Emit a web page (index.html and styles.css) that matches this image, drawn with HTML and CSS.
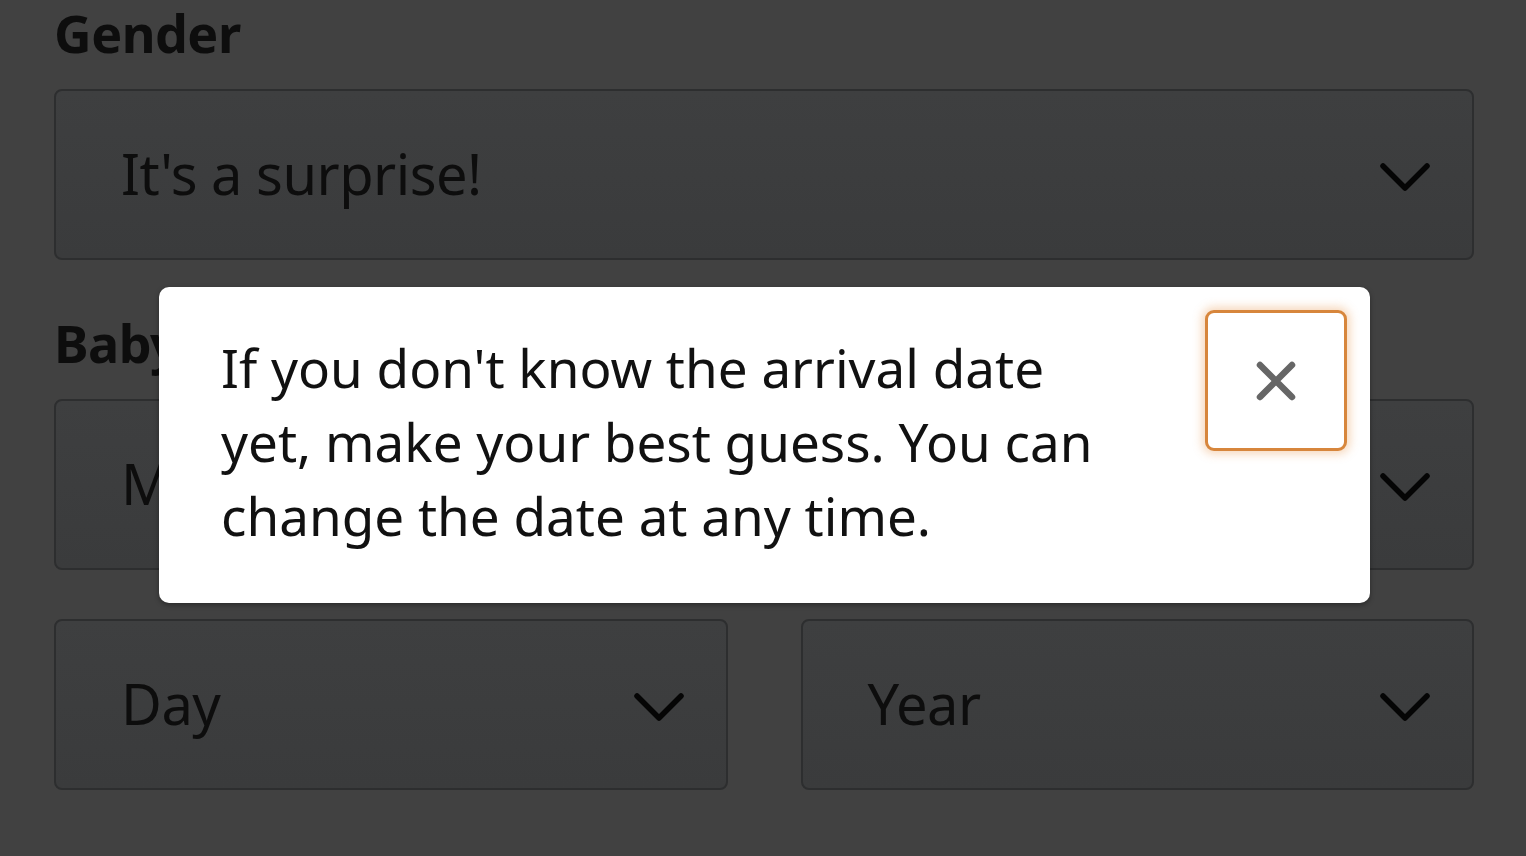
FILE: index.html
```html
<!DOCTYPE html>
<html>
<head>
<meta charset="utf-8">
<link rel="stylesheet" href="styles.css">
</head>
<body>
<div class="page">
  <div class="label">Gender</div>
  <div class="select">
    <span class="value">It's a surprise!</span>
    <svg class="chev" viewBox="0 0 50 30"><path d="M3 4 L25 26 L47 4" /></svg>
  </div>
  <div class="label label-gap">Baby's arrival date</div>
  <div class="select">
    <span class="value">Month</span>
    <svg class="chev" viewBox="0 0 50 30"><path d="M3 4 L25 26 L47 4" /></svg>
  </div>
  <div class="row">
    <div class="select">
      <span class="value">Day</span>
      <svg class="chev" viewBox="0 0 50 30"><path d="M3 4 L25 26 L47 4" /></svg>
    </div>
    <div class="select">
      <span class="value">Year</span>
      <svg class="chev" viewBox="0 0 50 30"><path d="M3 4 L25 26 L47 4" /></svg>
    </div>
  </div>
</div>
<div class="popover">
  <p class="pop-text">If you don't know the arrival date<br>yet, make your best guess. You can<br>change the date at any time.</p>
  <button class="close" aria-label="Close">
    <svg viewBox="0 0 40 40"><path d="M4 4 L36 36 M36 4 L4 36" /></svg>
  </button>
</div>
</body>
</html>
```
FILE: styles.css
```css
html, body {
  margin: 0;
  padding: 0;
}
body {
  background: #414141;
  width: 1526px;
  height: 856px;
  overflow: hidden;
  font-family: "Noto Sans", "Open Sans", sans-serif;
  color: #0d0d0d;
  position: relative;
}
.page {
  padding: 3px 52px 0 54px;
}
.label {
  font-size: 52px;
  font-weight: 700;
  line-height: 60px;
  height: 60px;
  letter-spacing: -0.5px;
  white-space: nowrap;
}
.label-gap {
  margin-top: 53px;
}
.select {
  margin-top: 26px;
  height: 171px;
  box-sizing: border-box;
  border: 2px solid #2d2e2f;
  border-radius: 8px;
  background: linear-gradient(180deg, #3e3f40 0%, #3a3b3c 100%);
  display: flex;
  align-items: center;
  justify-content: space-between;
  padding: 0 42px 0 65px;
}
.value {
  font-size: 56px;
  line-height: 60px;
  letter-spacing: -0.5px;
  color: #0d0d0d;
  margin-top: -3px;
}
.chev {
  width: 50px;
  height: 30px;
  margin-top: 4px;
}
.chev path {
  fill: none;
  stroke: #050505;
  stroke-width: 5.5;
  stroke-linecap: round;
  stroke-linejoin: round;
}
.row {
  margin-top: 49px;
  display: grid;
  grid-template-columns: 1fr 1fr;
  column-gap: 73px;
}
.row .select {
  margin-top: 0;
}
.popover {
  position: absolute;
  left: 159px;
  top: 287px;
  width: 1211px;
  height: 316px;
  box-sizing: border-box;
  background: #ffffff;
  border-radius: 10px;
  box-shadow: 0 2px 5px rgba(0, 0, 0, 0.35);
  padding: 44px 0 0 62px;
}
.pop-text {
  margin: 0;
  font-size: 53px;
  line-height: 74px;
  color: #111111;
  white-space: nowrap;
}
.close {
  position: absolute;
  top: 23px;
  right: 23px;
  width: 142px;
  height: 141px;
  box-sizing: border-box;
  background: #ffffff;
  border: 3px solid #d7863c;
  border-radius: 9px;
  box-shadow: 0 0 10px 3px rgba(228, 140, 60, 0.35);
  padding: 0;
  display: flex;
  align-items: center;
  justify-content: center;
}
.close svg {
  width: 40px;
  height: 40px;
}
.close path {
  fill: none;
  stroke: #666666;
  stroke-width: 6.5;
  stroke-linecap: round;
}
```
